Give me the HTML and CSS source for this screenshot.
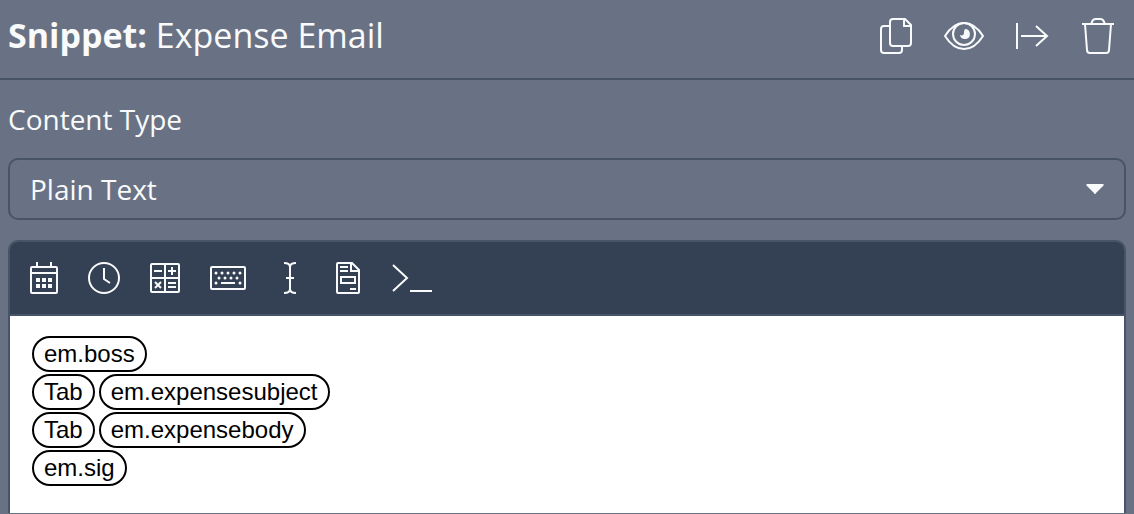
FILE: index.html
```html
<!DOCTYPE html>
<html lang="en">
<head>
    <meta charset="UTF-8">
    <meta name="viewport" content="width=device-width, initial-scale=1.0">
    <title>Snippet: Expense Email</title>
    <link rel="stylesheet" href="styles.css">
</head>
<body>

    <!-- Header -->
    <header class="header">
        <h1 class="title"><strong>Snippet:</strong> Expense Email</h1>
        <div class="actions">
            <button type="button" aria-label="Duplicate">
                <svg width="40" height="40" viewBox="0 0 40 40">
                    <path d="M13 10H8a3 3 0 0 0-3 3v21a3 3 0 0 0 3 3h15a3 3 0 0 0 3-3v-4"/>
                    <path d="M17 3h12l6 6v18a3 3 0 0 1-3 3H17a3 3 0 0 1-3-3V6a3 3 0 0 1 3-3z"/>
                    <path d="M28 3v7h7"/>
                </svg>
            </button>
            <button type="button" aria-label="Preview">
                <svg width="40" height="40" viewBox="0 0 40 40">
                    <path d="M1 20C6 12 12 7 20 7s14 5 19 13c-5 8-11 13-19 13S6 28 1 20z"/>
                    <circle cx="20" cy="18" r="11"/>
                    <path class="solid" d="M21 13a5 5 0 1 1-5 6c2 1 4 0 4-2 0-1 0-3 1-4z"/>
                </svg>
            </button>
            <button type="button" aria-label="Move">
                <svg width="40" height="40" viewBox="0 0 40 40">
                    <path d="M5 7v26M9 20h26M24 10l11 10-11 10"/>
                </svg>
            </button>
            <button type="button" aria-label="Delete">
                <svg width="40" height="40" viewBox="0 0 40 40">
                    <path d="M2 8h32M5 8l2 26a3 3 0 0 0 3 3h16a3 3 0 0 0 3-3l2-26M11 8l1-2a4 4 0 0 1 4-3h4a4 4 0 0 1 4 3l1 2"/>
                </svg>
            </button>
        </div>
    </header>

    <main class="content">
        <!-- Content type -->
        <label class="field-label" for="content-type">Content Type</label>
        <div class="select-wrap">
            <select id="content-type">
                <option>Plain Text</option>
                <option>Rich Text</option>
                <option>HTML</option>
            </select>
            <svg class="caret" width="18" height="10" viewBox="0 0 18 10"><path d="M1 0h16l1 1-8 8a1 1 0 0 1-2 0L0 1z"/></svg>
        </div>

        <!-- Editor -->
        <section class="editor">
            <div class="toolbar" role="toolbar" aria-label="Insert">
                <button type="button" aria-label="Date">
                    <svg width="28" height="32" viewBox="0 0 28 32">
                        <rect x="1" y="5" width="26" height="26" rx="1"/>
                        <path d="M1 11h26M7 0v5M21 0v5"/>
                        <path class="solid" d="M6 16h4v4H6zM12 16h4v4h-4zM18 16h4v4h-4zM6 22h4v4H6zM12 22h4v4h-4zM18 22h4v4h-4z"/>
                    </svg>
                </button>
                <button type="button" aria-label="Time">
                    <svg width="32" height="32" viewBox="0 0 32 32">
                        <circle cx="16" cy="16" r="15"/>
                        <path d="M16 6v11l6 4"/>
                    </svg>
                </button>
                <button type="button" aria-label="Math">
                    <svg width="30" height="30" viewBox="0 0 30 30">
                        <rect x="1" y="1" width="28" height="28" rx="1"/>
                        <path d="M15 1v28M1 15h28M4 8h8M18 8h8M22 4v8M18 20h8M18 24h8M5 19l6 6M11 19l-6 6"/>
                    </svg>
                </button>
                <button type="button" aria-label="Keyboard">
                    <svg width="36" height="24" viewBox="0 0 36 24">
                        <rect x="1" y="1" width="34" height="22" rx="1"/>
                        <path class="dots" d="M6 7h0M12 7h0M18 7h0M24 7h0M30 7h0M9 12h0M15 12h0M21 12h0M27 12h0M6 17h0M30 17h0"/>
                        <path d="M11 17h14"/>
                    </svg>
                </button>
                <button type="button" aria-label="Cursor">
                    <svg width="28" height="32" viewBox="0 0 28 32">
                        <path d="M8 1c4 0 6 1 6 4v22c0 3-2 4-6 4M20 1c-4 0-6 1-6 4M20 31c-4 0-6-1-6-4M10 16h8"/>
                    </svg>
                </button>
                <button type="button" aria-label="Form">
                    <svg width="28" height="32" viewBox="0 0 28 32">
                        <path d="M4 1h14l7 7v22a1 1 0 0 1-1 1H4a1 1 0 0 1-1-1V2a1 1 0 0 1 1-1z"/>
                        <path d="M17 1v8h8M6 5h8M6 9h8M16 27h6"/>
                        <rect x="7" y="15" width="14" height="6"/>
                    </svg>
                </button>
                <button type="button" aria-label="Script">
                    <svg width="40" height="32" viewBox="0 0 40 32">
                        <path d="M1 3l14 13L1 29M18 29h22"/>
                    </svg>
                </button>
            </div>
            <div class="text" contenteditable="true" role="textbox" aria-multiline="true" aria-label="Snippet content" spellcheck="false">
                <div class="line"><span class="tag">em.boss</span></div>
                <div class="line"><span class="tag">Tab</span><span class="tag">em.expensesubject</span></div>
                <div class="line"><span class="tag">Tab</span><span class="tag">em.expensebody</span></div>
                <div class="line"><span class="tag">em.sig</span></div>
            </div>
        </section>
    </main>

</body>
</html>
```
FILE: styles.css
```css
* {
    margin: 0;
    padding: 0;
    box-sizing: border-box;
}

body {
    display: flex;
    flex-direction: column;
    min-height: 100vh;
    font-family: "Open Sans", sans-serif;
    font-size: 28px;
    background-color: #687284;
    color: #f9fafb;
}

button {
    display: flex;
    border: none;
    background: none;
    color: inherit;
    cursor: pointer;
}

svg {
    display: block;
    fill: none;
    stroke: #f9fafb;
    stroke-width: 2;
}

.solid {
    fill: #f9fafb;
    stroke: none;
}

.dots {
    stroke-width: 3;
    stroke-linecap: round;
}

/* Header */
.header {
    display: flex;
    justify-content: space-between;
    align-items: flex-start;
    padding: 16px 14px 22px 8px;
    border-bottom: 2px solid #475467;
}

.title {
    font-size: 34px;
    font-weight: 400;
    line-height: 38px;
}

.title strong {
    font-weight: 700;
}

.actions {
    display: flex;
    gap: 28px;
}

/* Content type */
.content {
    flex: 1;
    display: flex;
    flex-direction: column;
    padding: 20px 8px 1px;
}

.field-label {
    margin-bottom: 20px;
    line-height: 38px;
}

.select-wrap {
    position: relative;
    margin-bottom: 20px;
}

select {
    display: block;
    width: 100%;
    height: 62px;
    padding: 0 52px 0 20px;
    border: 2px solid #475467;
    border-radius: 10px;
    appearance: none;
    background: none;
    font: inherit;
    color: inherit;
}

.caret {
    position: absolute;
    top: 26px;
    right: 22px;
    fill: #f9fafb;
    stroke: none;
    pointer-events: none;
}

/* Editor */
.editor {
    flex: 1;
    display: flex;
    flex-direction: column;
    border: 2px solid #475467;
    border-bottom: none;
    border-radius: 10px 10px 0 0;
    overflow: hidden;
}

.toolbar {
    display: flex;
    align-items: center;
    gap: 30px;
    padding: 20px;
    border-bottom: 2px solid #475467;
    background-color: #344054;
}

.text {
    flex: 1;
    padding: 20px 22px;
    outline: none;
    background-color: #fff;
    color: #000;
    font-family: "Liberation Sans", Arial, sans-serif;
    font-size: 24px;
}

.line {
    display: flex;
    gap: 4px;
    margin-bottom: 2px;
}

.tag {
    padding: 0 10px;
    border: 2px solid #000;
    border-radius: 18px;
    line-height: 32px;
}
```
